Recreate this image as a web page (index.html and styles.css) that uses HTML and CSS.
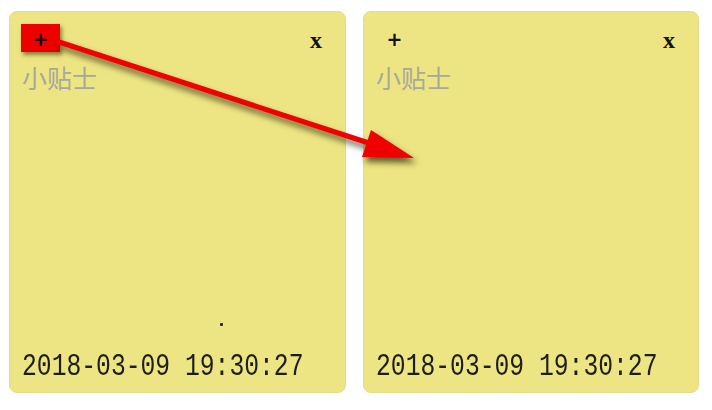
FILE: index.html
```html
<!DOCTYPE html>
<html lang="zh">
<head>
<meta charset="utf-8">
<title>小贴士</title>
<link rel="stylesheet" href="styles.css">
</head>
<body>
<div class="board">
  <div class="note">
    <div class="note-head">
      <span class="add add-active">+</span>
      <span class="close">x</span>
    </div>
    <div class="note-title">小贴士</div>
    <div class="note-body"><span class="dot"></span></div>
    <div class="note-date">2018-03-09 19:30:27</div>
  </div>
  <div class="note">
    <div class="note-head">
      <span class="add">+</span>
      <span class="close">x</span>
    </div>
    <div class="note-title">小贴士</div>
    <div class="note-body"></div>
    <div class="note-date">2018-03-09 19:30:27</div>
  </div>
</div>
<svg class="arrow" width="712" height="410" viewBox="0 0 712 410">
  <g class="arrow-shape">
    <line x1="56" y1="41" x2="378" y2="146" stroke="#f00000" stroke-width="5" stroke-linecap="butt"/>
    <polygon points="414,158 371,130 362,157" fill="#f00000"/>
  </g>
</svg>
</body>
</html>
```

FILE: styles.css
```css
html, body {
  margin: 0;
  padding: 0;
  background: #ffffff;
}
body {
  width: 712px;
  height: 410px;
  position: relative;
  overflow: hidden;
  font-family: "Liberation Sans", "Noto Sans CJK SC", sans-serif;
}
.board {
  display: flex;
  gap: 17px;
  padding: 11px 0 0 9px;
}
.note {
  width: 337px;
  height: 382px;
  box-sizing: border-box;
  background: #ede583;
  border: 1px solid #e8d98c;
  border-radius: 8px;
  padding: 12px 0 0 11px;
  display: flex;
  flex-direction: column;
}
.note + .note {
  width: 336px;
}
.note-head {
  height: 28px;
  display: flex;
  align-items: center;
  justify-content: space-between;
  padding-right: 23px;
}
.add {
  width: 39px;
  height: 28px;
  display: flex;
  align-items: center;
  justify-content: center;
  font-family: "DejaVu Sans", sans-serif;
  font-size: 19px;
  font-weight: bold;
  line-height: 1;
  color: #111;
  padding-top: 2px;
  box-sizing: border-box;
}
.add-active {
  background: #ee0000;
  box-shadow: 2px 3px 4px rgba(60, 40, 0, 0.55);
}
.close {
  font-family: "Liberation Serif", "Times New Roman", serif;
  font-weight: bold;
  font-size: 24px;
  line-height: 1;
  color: #111;
  padding-top: 4px;
}
.note-title {
  margin-top: 10px;
  padding-left: 1px;
  font-family: "Noto Sans CJK SC", sans-serif;
  font-size: 25px;
  line-height: 30px;
  color: #a9a89a;
}
.note-body {
  flex: 1;
  position: relative;
}
.dot {
  position: absolute;
  left: 199px;
  top: 231px;
  width: 3px;
  height: 3px;
  background: #2a2a1a;
  border-radius: 1px;
}
.note-date {
  padding-left: 1px;
  margin-bottom: 10px;
  font-family: "Liberation Mono", "Courier New", monospace;
  font-size: 24.7px;
  line-height: 26px;
  color: #1e1e16;
  transform: scaleY(1.25);
  transform-origin: 0 100%;
  white-space: nowrap;
}
.arrow {
  position: absolute;
  left: 0;
  top: 0;
  pointer-events: none;
}
.arrow-shape {
  filter: drop-shadow(3px 5px 3px rgba(40, 30, 0, 0.7));
}
```
